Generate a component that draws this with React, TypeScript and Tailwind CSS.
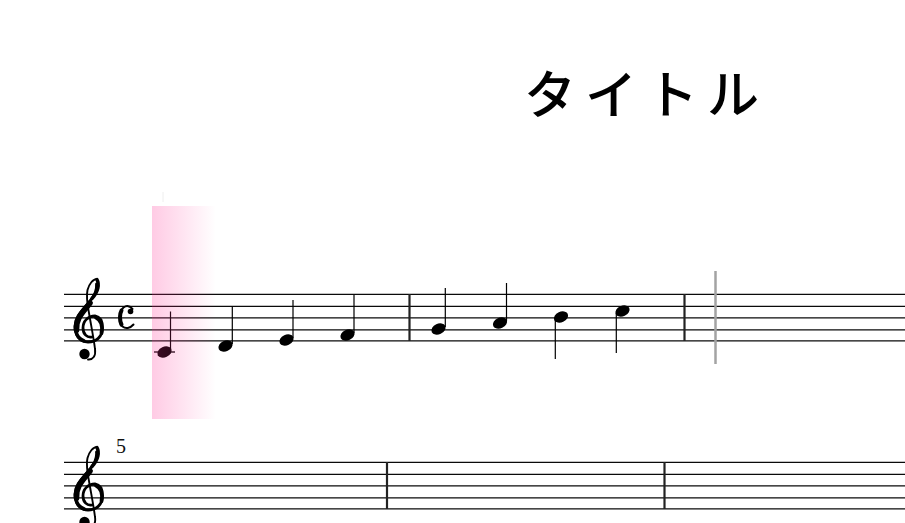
const LINES = [0, 12, 23.5, 35.5, 46.5];

const NOTES = [
  { x: 164.5, y: 352, stem: 170.5, from: 350, to: 311.5 },
  { x: 225.5, y: 346, stem: 232.3, from: 344, to: 306.5 },
  { x: 286.5, y: 340, stem: 293, from: 338, to: 300 },
  { x: 347.5, y: 335, stem: 354, from: 333, to: 295 },
  { x: 438.5, y: 329, stem: 445.3, from: 327, to: 288 },
  { x: 500, y: 323, stem: 506.5, from: 321, to: 283 },
  { x: 561, y: 317, stem: 555.3, from: 319, to: 359 },
  { x: 622.5, y: 311, stem: 616.3, from: 313, to: 353 },
];

// y is the top line of the staff, drawn in page coordinates
function Staff({ y, bars }: { y: number; bars: number[] }) {
  return (
    <g>
      {LINES.map((l) => (
        <line key={l} x1="64" x2="905" y1={y + l + 0.4} y2={y + l + 0.4} stroke="#0a0a0a" strokeWidth="1.4" />
      ))}
      {bars.map((b) => (
        <line key={b} x1={b} x2={b} y1={y} y2={y + 47} stroke="#222" strokeWidth="2.2" />
      ))}
      <Clef y={y} />
    </g>
  );
}

function Clef({ y }: { y: number }) {
  return (
    <g transform={`translate(0 ${y - 294})`} fill="none" stroke="#000" strokeLinecap="round">
      <path d="M92 337C87 338 83 334 83 328C83 321 88 316 95 316C101 317 102.5 323 102.5 328C102.5 337 96 342 88 342C80 342 75 335 75 326C75 316 84 309 90 301C95 295 97 289 96.5 284" strokeWidth="2.8" />
      <path d="M76.5 330C75.5 318 84 311 90 303" strokeWidth="5.6" />
      <path d="M101.5 333C103 326 101 320 96 317.5" strokeWidth="3.8" />
      <path d="M84 341C79 339 76.5 335 76 331" strokeWidth="3.6" />
      <path d="M97 279C93 279 89 284 87.5 290C86 297 87 303 89 313C91 325 94 340 95 349C96 356 93 360 88 359.5" strokeWidth="1.9" />
      <path d="M97 279.5C99.5 284 98.5 292 92 298.5" strokeWidth="3.4" />
      <circle cx="84.5" cy="354" r="5.2" fill="#000" stroke="none" />
    </g>
  );
}

function CommonTime() {
  return (
    <g fill="none" stroke="#000" strokeLinecap="round">
      <path d="M132.5 309C129.5 305.5 126 305.5 123.5 307.5C118.5 312 118.5 323.5 122.5 326.5C125.5 329 130 328.5 133.5 324.5" strokeWidth="2" />
      <path d="M121.5 310.5C119.5 314 119.5 320.5 121.5 324.5" strokeWidth="4" />
      <circle cx="130.5" cy="311.5" r="2.8" fill="#000" stroke="none" />
    </g>
  );
}

export default function App() {
  return (
    <div className="flex h-[523px] w-[905px] flex-col overflow-hidden bg-white">
      <header className="flex h-[190px] shrink-0 pl-[524px] pt-[54px]">
        <h1 className="text-[52px] font-medium leading-[76px] tracking-[9px] text-black [font-family:'Noto_Sans_CJK_JP',sans-serif]">
          タイトル
        </h1>
      </header>

      <section className="relative h-[240px] shrink-0">
        <svg className="block h-[240px] w-[905px]" viewBox="0 190 905 240">
          <line x1="163" x2="163" y1="192" y2="202" stroke="#eee" strokeWidth="1" />
          <Staff y={294} bars={[409.5, 684.5]} />
          <CommonTime />
          <line x1="154" x2="175" y1="352" y2="352" stroke="#000" strokeWidth="1.3" />
          {NOTES.map((n) => (
            <g key={n.x}>
              <line x1={n.stem} x2={n.stem} y1={n.from} y2={n.to} stroke="#000" strokeWidth="1.2" />
              <ellipse cx={n.x} cy={n.y} rx="7.4" ry="5.3" transform={`rotate(-25 ${n.x} ${n.y})`} fill="#000" />
            </g>
          ))}
          <line x1="715.5" x2="715.5" y1="271" y2="364" stroke="#a3a3a3" strokeWidth="2.5" />
        </svg>
        <div className="absolute left-[152px] top-[16px] h-[213px] w-[64px] bg-gradient-to-r from-[#ff2e94]/25 to-[#ff2e94]/0" />
      </section>

      <section className="relative h-[93px] shrink-0">
        <svg className="block h-[93px] w-[905px]" viewBox="0 430 905 93">
          <Staff y={462} bars={[387, 664.5]} />
        </svg>
        <span className="absolute left-[116px] top-[5px] text-[20px] leading-[22px] text-[#111] [font-family:'Liberation_Serif',serif]">
          5
        </span>
      </section>
    </div>
  );
}
